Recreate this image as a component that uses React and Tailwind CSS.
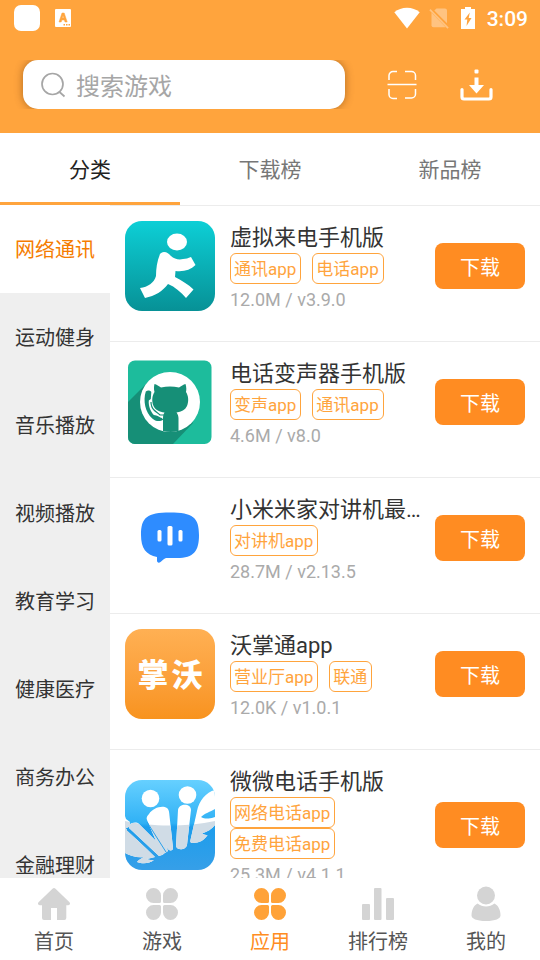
import React from "react";

function AssistantBadge() {
  return (
    <svg width="16" height="18" viewBox="0 0 16 18" aria-hidden="true">
      <rect width="16" height="18" rx="1" fill="#fff" />
      <path d="M4 13 7 4h2.200l3 9H10l-.6-2H6.800l-.6 2zM7.300 9h1.500L8 6.500z" fill="#ffa43d" stroke="#ffa43d" strokeWidth=".5" fillRule="evenodd" />
      <path d="M8.500 15h1.500v1.500H8.500zM11 15h1.500v1.500H11zM13.500 15H15v1.500h-1.500z" fill="#ffa43d" />
    </svg>
  );
}

function WifiIcon() {
  return (
    <svg width="26" height="22" viewBox="0 0 26 22" aria-hidden="true">
      <path d="M13 21.500.3 5.300C3.800 2.300 8.200.7 13 .7s9.200 1.600 12.700 4.600z" fill="#fff" />
    </svg>
  );
}

function NoSimIcon() {
  return (
    <svg width="20" height="22" viewBox="0 0 20 22" aria-hidden="true">
      <g fill="#fff" opacity=".35">
        <path d="M7.500 1.500H16a2 2 0 0 1 2 2v12.700L5.300 3.500z" />
        <path d="M2.500 5.800 16.700 20.200H4.500a2 2 0 0 1-2-2z" />
        <path d="m.3 3.200 1.200-1.200 18.200 18.500-1.200 1.200z" />
      </g>
    </svg>
  );
}

function BatteryIcon() {
  return (
    <svg width="14" height="22" viewBox="0 0 14 22" aria-hidden="true">
      <path d="M4 0h6v2h4v20H0V2h4z" fill="#fff" />
      <path d="M8.800 5.500 3.500 12.500h2.800L5.500 19l5-8H7.700z" fill="#ffa43d" />
    </svg>
  );
}

function StatusBar() {
  return (
    <div className="flex h-9 items-center justify-between pr-[12px] pl-[14px]">
      <div className="flex items-center gap-[15px]">
        <span className="size-[26px] rounded-[7px] bg-white" />
        <AssistantBadge />
      </div>
      <div className="flex items-center">
        <div className="flex items-center pr-[12px]">
          <WifiIcon />
          <div className="flex items-center gap-[12px] pl-[9px]">
            <NoSimIcon />
            <BatteryIcon />
          </div>
        </div>
        <span className="pt-[2px] text-[21px] leading-6 font-medium text-white">3:09</span>
      </div>
    </div>
  );
}

function ScanIcon() {
  return (
    <svg width="30" height="30" viewBox="0 0 30 30" fill="none" stroke="#fff" strokeWidth="1.500" aria-hidden="true">
      <path d="M2 10V5.500A4 4 0 0 1 6 1.500h4M18 1.500h6.500a4 4 0 0 1 4 4V10M28.500 19v5a4 4 0 0 1-4 4H18M10 28.500H6a4 4 0 0 1-4-4V19" />
      <path d="M.5 14.500h29" />
    </svg>
  );
}

function InboxIcon() {
  return (
    <svg width="33" height="32" viewBox="0 0 33 32" aria-hidden="true">
      <path d="M2 20.500V28a2 2 0 0 0 2 2h25a2 2 0 0 0 2-2v-7.500" fill="none" stroke="#fff" strokeWidth="3.200" strokeLinecap="round" />
      <rect x="14.500" y=".5" width="4" height="4" rx="1" fill="#fff" />
      <path d="M14.500 8.500h4V16h5.500l-7.500 8.500L9 16h5.500z" fill="#fff" />
    </svg>
  );
}

function SearchRow() {
  return (
    <div className="flex items-center pt-6 pr-[47px] pb-6 pl-[13px]">
      <div className="min-w-0 flex-1 overflow-hidden px-[10px]">
        <label className="flex h-[49px] items-center gap-[10px] rounded-[15px] bg-white pl-[17px] shadow-[0_0_9px_rgba(80,40,0,0.45)]">
          <svg className="shrink-0" width="26" height="26" viewBox="0 0 26 26" fill="none" stroke="#a6a6a6" strokeWidth="1.700" aria-hidden="true">
            <circle cx="12.500" cy="12" r="10.500" />
            <path d="m19.500 20 5 4.500" />
          </svg>
          <input
            type="search"
            aria-label="搜索游戏"
            placeholder="搜索游戏"
            className="h-full w-full min-w-0 bg-transparent pt-1 text-[24px] outline-none placeholder:text-[#a6a6a6]"
          />
        </label>
      </div>
      <button type="button" aria-label="扫一扫" className="ml-8">
        <ScanIcon />
      </button>
      <button type="button" aria-label="下载管理" className="ml-[43px]">
        <InboxIcon />
      </button>
    </div>
  );
}

const tabs = ["分类", "下载榜", "新品榜"];

function Tabs() {
  return (
    <div role="tablist" className="grid h-[72px] shrink-0 grid-cols-3 bg-white text-[21px]">
      {tabs.map((tab, i) => (
        <button
          key={tab}
          type="button"
          role="tab"
          aria-selected={i === 0}
          className={
            i === 0
              ? "border-b-[3px] border-[#ffa43d] pt-[7px] text-[#222]"
              : "border-b-[3px] border-transparent pt-[7px] text-[#777]"
          }
        >
          {tab}
        </button>
      ))}
    </div>
  );
}

const categories = ["网络通讯", "运动健身", "音乐播放", "视频播放", "教育学习", "健康医疗", "商务办公", "金融理财"];

function Sidebar() {
  return (
    <div className="w-[110px] shrink-0 overflow-hidden bg-[#efefef]">
      {categories.map((name, i) => (
        <button
          key={name}
          type="button"
          className={
            i === 0
              ? "block h-[88px] w-full bg-white pt-[2px] text-[20px] text-[#f57c00]"
              : "block h-[88px] w-full pt-[2px] text-[20px] text-[#333]"
          }
        >
          {name}
        </button>
      ))}
    </div>
  );
}

function RunnerLogo() {
  return (
    <svg className="size-[90px]" viewBox="0 0 90 90" aria-hidden="true">
      <defs>
        <linearGradient id="runner" x1="0" y1="0" x2="0" y2="1">
          <stop offset="0" stopColor="#0dcfd6" />
          <stop offset="1" stopColor="#079196" />
        </linearGradient>
      </defs>
      <rect width="90" height="90" rx="17" fill="url(#runner)" />
      <ellipse cx="52" cy="21" rx="10" ry="8.500" fill="#fff" />
      <path
        d="M39 31c3 0 5 2 7 4 3 3 8 4 12 3 3 0 5-1 8-2l4.500 8c-5 5-12 7-20 6l-.5 6c7 4 13 7 18.500 12.500L61 77c-5-6-11-11-18-14-5 7-13 12-23 14l-5-10c8-1 14-5 16-12 0-7 1-15 4-22 1-1 2-2 4-2z"
        fill="#fff"
      />
    </svg>
  );
}

function CatLogo() {
  return (
    <svg className="size-[90px]" viewBox="0 0 90 90" aria-hidden="true">
      <rect x="3" y="3.500" width="83.500" height="83.500" rx="7" fill="#1dbc9c" />
      <path d="M24 24 3 45v35a7 7 0 0 0 7 7h38l20-21z" fill="#168f77" />
      <circle cx="45" cy="45" r="30" fill="#fff" />
      <path
        d="M29.500 27c2 .5 4.500 2 6.500 3.500 6-1.500 12-1.500 18 0 2-1.500 4.500-3 6.500-3.500 1 3 1 6 .5 8 2.500 4 3 9 1 14-2 4-5.500 6-10.500 6.500 1.500 2 2 4 2 6V74a30 30 0 0 1-15.500 0V61c0-2 .5-4 1.500-5.500-5-.5-9-2.500-11-6.500-2-5-1.500-10 1-14-.7-3-.7-5 0-8z"
        fill="#168f77"
      />
      <path
        d="M20.800 34.500c2-1.500 4.500-1 5.500.5l-.5 7-2 1.500c-.5 5 1.500 10.500 5 14.500l2.500.5c2 .5 3.500 2 5.500 2.500l1.500 1.500c-3 2.500-8 2-11-1-7-6-9.500-18-6.500-27z"
        fill="#168f77"
      />
      <path d="M26 45c0 3 1 6 3 8 2 2 4 3 6 5h4" fill="none" stroke="#168f77" strokeWidth="1.200" />
    </svg>
  );
}

function BubbleLogo() {
  return (
    <svg className="size-[90px]" viewBox="0 0 90 90" aria-hidden="true">
      <path
        d="M45 19.500c23 0 29 5 29 22.500 0 16-5 23-22 23H41c-2 1-4 2.500-5.500 4-1.800 1.300-3.500.5-3.500-1.500v-3.500c-11-2-16-9-16-22 0-17.500 6-22.500 29-22.500z"
        fill="#2e8cff"
      />
      <g fill="#fff">
        <rect x="32.500" y="37" width="4" height="11.500" rx="1.500" />
        <rect x="42.500" y="33" width="5" height="19.500" rx="1.500" />
        <rect x="53.500" y="37" width="4" height="11.500" rx="1.500" />
      </g>
    </svg>
  );
}

function WoLogo() {
  return (
    <div className="flex size-[90px] items-center justify-center gap-[3px] rounded-[17px] bg-linear-to-b from-[#ffb053] to-[#f8931d] pb-1 font-['Noto_Sans_CJK_SC',sans-serif] text-[31px] leading-none font-black text-white">
      <span>掌</span>
      <span>沃</span>
    </div>
  );
}

function PeopleLogo() {
  return (
    <svg className="size-[90px]" viewBox="0 0 90 90" aria-hidden="true">
      <defs>
        <linearGradient id="sky" x1="0" y1="0" x2="0" y2="1">
          <stop offset="0" stopColor="#66d0ff" />
          <stop offset=".48" stopColor="#30b1f5" />
          <stop offset=".52" stopColor="#1c9dec" />
          <stop offset="1" stopColor="#369fe8" />
        </linearGradient>
        <clipPath id="tile">
          <rect width="90" height="90" rx="17" />
        </clipPath>
        <clipPath id="figures">
          <path d="M22 40c-1-2 0-4 2-6 4-6 13-9 18-6 1.500 1 2 3 2.200 5L48 68c0 2.500-2.500 3-4 2-1-1-2-2-3-4z" />
          <path d="M53 30c1-7 13-7 13 0l-4 35c-1 5-10 6-11 1z" />
          <path d="M72 31c2-10 9-19 18-21v19c-5 3-10 4-14 8 5 3 10 1 14 0v8c-3 4-8 7-13 8.500 2 1 4 1.500 5.500 1.500-3 5-8 8-15 8-2 0-2.500-1-2-3z" />
          <path d="M4 48c-1-5 7-7 10-4l27 27c-1 3-4 4-7 5z" />
          <path d="M22 40 41 66l2 5-6 4z" />
          <path d="m0 36 1 3 4 3v4l-5 3z" />
          <path d="m0 48 30 29-8 2c2 1 4 1.500 7 1-5 4-12 4-17 2 1-2 4-3 7-5-7 1-13-1-19-4z" />
        </clipPath>
      </defs>
      <g clipPath="url(#tile)">
        <rect width="90" height="90" fill="url(#sky)" />
        <circle cx="25.500" cy="18.500" r="8.800" fill="#fff" />
        <circle cx="62.500" cy="15" r="8.800" fill="#fff" />
        <g clipPath="url(#figures)">
          <rect width="90" height="90" fill="#fff" />
          <path d="M0 41c26 6 62 6 90 0v49H0z" fill="#d0dce6" />
        </g>
        <path d="m2 50 30 27M22 42l19 30" fill="none" stroke="#2aa0ea" strokeWidth="1" />
      </g>
    </svg>
  );
}

const apps = [
  { name: "虚拟来电手机版", tags: ["通讯app", "电话app"], meta: "12.0M / v3.9.0", Logo: RunnerLogo },
  { name: "电话变声器手机版", tags: ["变声app", "通讯app"], meta: "4.6M / v8.0", Logo: CatLogo },
  { name: "小米米家对讲机最…", tags: ["对讲机app"], meta: "28.7M / v2.13.5", Logo: BubbleLogo },
  { name: "沃掌通app", tags: ["营业厅app", "联通"], meta: "12.0K / v1.0.1", Logo: WoLogo },
  { name: "微微电话手机版", tags: ["网络电话app", "免费电话app"], meta: "25.3M / v4.1.1", Logo: PeopleLogo },
];

function AppRow({ name, tags, meta, Logo }) {
  return (
    <li className="flex items-center border-t border-[#ececec] px-[15px] pt-[15px] pb-[30px]">
      <div className="mr-[15px] shrink-0">
        <Logo />
      </div>
      <div className="min-w-0 flex-1 self-start">
        <h2 className="h-8 truncate text-[22px] leading-[34px] text-[#333]">{name}</h2>
        <div className="flex flex-wrap gap-x-[11px]">
          {tags.map((tag) => (
            <span
              key={tag}
              className="h-[31px] rounded-[6px] border border-[#ffa43d] pr-1 pl-[3px] text-[17px] leading-[30px] text-[#ffa43d]"
            >
              {tag}
            </span>
          ))}
        </div>
        <p className="h-[26px] text-[18px] leading-8 text-[#aaa]">{meta}</p>
      </div>
      <button
        type="button"
        className="ml-[10px] h-[46px] w-[90px] shrink-0 rounded-[8px] bg-[#ff8c22] pt-[3px] text-[20px] text-white"
      >
        下载
      </button>
    </li>
  );
}

function HomeIcon() {
  return (
    <svg width="36" height="36" viewBox="0 0 36 36" fill="#d4d4d4" aria-hidden="true">
      <path d="M16.500 2.700a2.200 2.200 0 0 1 3 0l14 13.600c1.100 1.200.5 2.900-1.200 2.900h-2V32a2 2 0 0 1-2 2H21V22h-6v12H8a2 2 0 0 1-2-2V19.200H3.700c-1.700 0-2.300-1.700-1.200-2.900z" />
    </svg>
  );
}

function PetalsIcon({ active }) {
  const petal = "M9.500 2a7.500 7.500 0 0 1 7.500 7.500V15.500a1.500 1.500 0 0 1-1.500 1.500H9.500a7.500 7.500 0 0 1 0-15z";
  return (
    <svg width="36" height="36" viewBox="0 0 36 36" fill={active ? "#ffa238" : "#d4d4d4"} aria-hidden="true">
      <path d={petal} />
      <path d={petal} transform="matrix(-1 0 0 1 36 0)" />
      <path d={petal} transform="matrix(1 0 0 -1 0 36)" />
      <path d={petal} transform="matrix(-1 0 0 -1 36 36)" />
    </svg>
  );
}

function RankIcon() {
  return (
    <svg width="36" height="36" viewBox="0 0 36 36" fill="#d4d4d4" aria-hidden="true">
      <rect x="2" y="18" width="8" height="16" rx="1" />
      <rect x="14" y="2" width="7.500" height="32" rx="1" />
      <rect x="26" y="12" width="8" height="22" rx="1" />
    </svg>
  );
}

function PersonIcon() {
  return (
    <svg width="36" height="36" viewBox="0 0 36 36" fill="#d4d4d4" aria-hidden="true">
      <circle cx="18" cy="9.500" r="9" />
      <path d="M9.500 17.500c5 4 12 4 17 0 4 2 6 7 6 12 0 3-5 5.500-14.500 5.500s-14.500-2.500-14.500-5.500c0-5 2-10 6-12z" />
    </svg>
  );
}

const navItems = [
  { label: "首页", Icon: HomeIcon },
  { label: "游戏", Icon: PetalsIcon },
  { label: "应用", Icon: PetalsIcon, active: true },
  { label: "排行榜", Icon: RankIcon },
  { label: "我的", Icon: PersonIcon },
];

function BottomNav() {
  return (
    <nav className="grid h-[82px] shrink-0 grid-cols-5 bg-white pt-2">
      {navItems.map(({ label, Icon, active }) => (
        <a
          key={label}
          href="#"
          aria-current={active ? "page" : undefined}
          className={
            active
              ? "flex flex-col items-center gap-[5px] text-[20px] leading-[30px] text-[#ff8c22]"
              : "flex flex-col items-center gap-[5px] text-[20px] leading-[30px] text-[#555]"
          }
        >
          <Icon active={active} />
          {label}
        </a>
      ))}
    </nav>
  );
}

export default function App() {
  return (
    <div className="flex h-dvh flex-col overflow-hidden bg-white font-[Roboto,'Noto_Sans_CJK_SC',sans-serif]">
      <header className="shrink-0 bg-[#ffa43d]">
        <StatusBar />
        <SearchRow />
      </header>
      <Tabs />
      <main className="flex min-h-0 flex-1 overflow-hidden">
        <Sidebar />
        <ul className="min-w-0 flex-1 overflow-hidden">
          {apps.map((app) => (
            <AppRow key={app.name} {...app} />
          ))}
        </ul>
      </main>
      <BottomNav />
    </div>
  );
}
